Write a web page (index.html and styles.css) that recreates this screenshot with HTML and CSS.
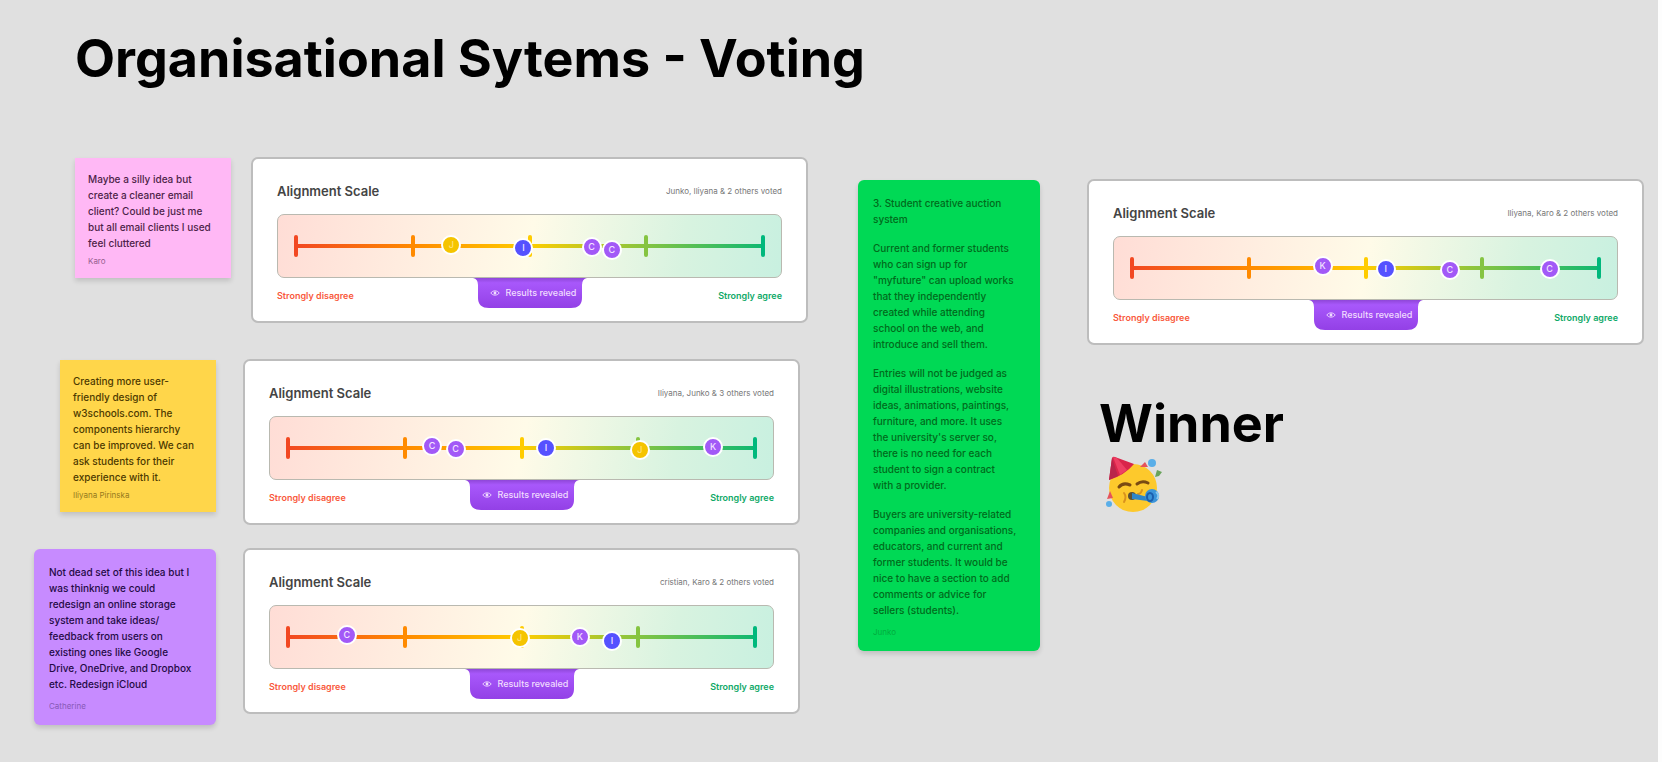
FILE: index.html
```html
<!DOCTYPE html>
<html lang="en">
<head>
<meta charset="utf-8">
<title>Organisational Sytems - Voting</title>
<link rel="stylesheet" href="styles.css">
</head>
<body>
<svg class="defs" aria-hidden="true">
  <symbol id="eye" viewBox="0 0 12 12">
    <path d="M1 6C3 2.600 9 2.600 11 6C9 9.400 3 9.400 1 6Z" fill="none" stroke="currentColor" stroke-width="1.100"/>
    <circle cx="6" cy="6" r="1.700" fill="currentColor"/>
  </symbol>
  <symbol id="tab" viewBox="0 0 114 30">
    <path d="M0 0H114Q109 1 109 7V20Q109 30 98 30H16Q5 30 5 20V7Q5 1 0 0Z" fill="url(#tabfill)"/>
  </symbol>
  <linearGradient id="tabfill" x1="0" y1="0" x2="0" y2="1">
    <stop offset="0" stop-color="#8f47d8"/>
    <stop offset="0.160" stop-color="#a858fb"/>
    <stop offset="1" stop-color="#9340e6"/>
  </linearGradient>
</svg>
<main class="board">
  <h1 class="heading heading-main">Organisational Sytems - Voting</h1>

  <article class="note note-pink">
    <p>Maybe a silly idea but<br>create a cleaner email<br>client? Could be just me<br>but all email clients I used<br>feel cluttered</p>
    <footer>Karo</footer>
  </article>
  <article class="note note-yellow">
    <p>Creating more user-<br>friendly design of<br>w3schools.com. The<br>components hierarchy<br>can be improved. We can<br>ask students for their<br>experience with it.</p>
    <footer>Iliyana Pirinska</footer>
  </article>
  <article class="note note-wide note-purple">
    <p>Not dead set of this idea but I<br>was thinknig we could<br>redesign an online storage<br>system and take ideas/<br>feedback from users on<br>existing ones like Google<br>Drive, OneDrive, and Dropbox<br>etc. Redesign iCloud</p>
    <footer>Catherine</footer>
  </article>
  <article class="note note-wide note-green">
    <p>3. Student creative auction<br>system</p>
    <p>Current and former students<br>who can sign up for<br>"myfuture" can upload works<br>that they independently<br>created while attending<br>school on the web, and<br>introduce and sell them.</p>
    <p>Entries will not be judged as<br>digital illustrations, website<br>ideas, animations, paintings,<br>furniture, and more. It uses<br>the university's server so,<br>there is no need for each<br>student to sign a contract<br>with a provider.</p>
    <p>Buyers are university-related<br>companies and organisations,<br>educators, and current and<br>former students. It would be<br>nice to have a section to add<br>comments or advice for<br>sellers (students).</p>
    <footer>Junko</footer>
  </article>

  <section class="card card-one">
    <header><h2>Alignment Scale</h2><span class="voted">Junko, Iliyana &amp; 2 others voted</span></header>
    <div class="scale"><div class="track">
      <i></i><i></i><i></i><i></i><i></i>
      <b class="vote gold" style="left:33.4%;top:46%">J</b>
      <b class="vote blue" style="left:48.7%;top:60%">I</b>
      <b class="vote" style="left:63.2%;top:55%">C</b>
      <b class="vote" style="left:67.5%;top:66%">C</b>
    </div></div>
    <footer><span class="no">Strongly disagree</span><span class="tab"><svg class="tab-shape"><use href="#tab"/></svg><svg class="eye"><use href="#eye"/></svg><span class="tab-text">Results revealed</span></span><span class="yes">Strongly agree</span></footer>
  </section>
  <section class="card card-two">
    <header><h2>Alignment Scale</h2><span class="voted">Iliyana, Junko &amp; 3 others voted</span></header>
    <div class="scale"><div class="track">
      <i></i><i></i><i></i><i></i><i></i>
      <b class="vote" style="left:31%;top:43%">C</b>
      <b class="vote" style="left:36%;top:53%">C</b>
      <b class="vote blue" style="left:55.2%;top:49%">I</b>
      <b class="vote gold" style="left:75.1%;top:61%">J</b>
      <b class="vote" style="left:90.7%;top:47%">K</b>
    </div></div>
    <footer><span class="no">Strongly disagree</span><span class="tab"><svg class="tab-shape"><use href="#tab"/></svg><svg class="eye"><use href="#eye"/></svg><span class="tab-text">Results revealed</span></span><span class="yes">Strongly agree</span></footer>
  </section>
  <section class="card card-three">
    <header><h2>Alignment Scale</h2><span class="voted">cristian, Karo &amp; 2 others voted</span></header>
    <div class="scale"><div class="track">
      <i></i><i></i><i></i><i></i><i></i>
      <b class="vote" style="left:12.9%;top:43%">C</b>
      <b class="vote gold" style="left:49.6%;top:53%">J</b>
      <b class="vote" style="left:62.4%;top:48%">K</b>
      <b class="vote blue" style="left:69.2%;top:66%">I</b>
    </div></div>
    <footer><span class="no">Strongly disagree</span><span class="tab"><svg class="tab-shape"><use href="#tab"/></svg><svg class="eye"><use href="#eye"/></svg><span class="tab-text">Results revealed</span></span><span class="yes">Strongly agree</span></footer>
  </section>
  <section class="card card-four">
    <header><h2>Alignment Scale</h2><span class="voted">Iliyana, Karo &amp; 2 others voted</span></header>
    <div class="scale"><div class="track">
      <i></i><i></i><i></i><i></i><i></i>
      <b class="vote" style="left:40.9%;top:41%">K</b>
      <b class="vote blue" style="left:54.3%;top:53%">I</b>
      <b class="vote" style="left:67.9%;top:58%">C</b>
      <b class="vote" style="left:89.1%;top:53%">C</b>
    </div></div>
    <footer><span class="no">Strongly disagree</span><span class="tab"><svg class="tab-shape"><use href="#tab"/></svg><svg class="eye"><use href="#eye"/></svg><span class="tab-text">Results revealed</span></span><span class="yes">Strongly agree</span></footer>
  </section>

  <section class="winner">
    <h2 class="heading">Winner</h2>
    <svg class="party" viewBox="0 0 60 60" role="img" aria-label="Partying face">
      <circle cx="30" cy="32" r="24" fill="#fdc92c"/>
      <path d="M6 24L9 2Q10 0 12 1L31 8Q22 19 6 24Z" fill="#d9254a"/>
      <path d="M6 24L9 2L15 20Z" fill="#b9254a"/>
      <path d="M10 1L14 2L24 14L17 19Z" fill="#ee3f63"/>
      <path d="M16 31Q20 26 27 29M34 28Q39 24 45 27" fill="none" stroke="#7a4a12" stroke-width="3" stroke-linecap="round"/>
      <path d="M21 37Q24 41 21 46M39 34Q38 38 35 38" fill="none" stroke="#d9921e" stroke-width="2" stroke-linecap="round"/>
      <circle cx="29" cy="40" r="4" fill="#5b5035"/>
      <path d="M29 37L45 41L45 45L29 43Z" fill="#2f86c8"/>
      <circle cx="49" cy="40" r="7" fill="#3b94d9"/>
      <ellipse cx="47" cy="41" rx="3" ry="4" fill="none" stroke="#1b5fae" stroke-width="2"/>
      <path d="M53 36Q57 39 54 43" fill="none" stroke="#8ec8ee" stroke-width="2"/>
      <circle cx="49" cy="7" r="4" fill="#5aaee8"/>
      <path d="M37 11L42 6L45 11Z" fill="#e5535b"/>
      <path d="M52 21L54 14L59 16L56 20Z" fill="#69a35b"/>
      <path d="M4 43L7 35L10 42Z" fill="#e5535b"/>
      <circle cx="6" cy="48" r="3" fill="#5aaee8"/>
    </svg>
  </section>
</main>
</body>
</html>
```
FILE: styles.css
```css
* { box-sizing: border-box; }
body { margin: 0; background: #e0e0e0; font-family: Inter, "Liberation Sans", sans-serif; }
h1, h2, p { margin: 0; }
.defs { position: absolute; width: 0; height: 0; }

/* Free canvas: every object has its own place */
.board { position: relative; min-height: 100vh; overflow: hidden; border-right: 4px solid #fdfdfd; }

.heading { font-size: 52px; line-height: 64px; font-weight: 700; color: #000; white-space: nowrap; }
.heading-main { position: absolute; left: 75px; top: 27px; }

.note { position: absolute; width: 156px; padding: 13px 13px 11px; font-size: 10px; line-height: 16px; font-weight: 500; white-space: nowrap; box-shadow: 0 3px 5px rgba(0, 0, 0, 0.14); }
.note footer { font-size: 8px; line-height: 12px; font-weight: 400; margin-top: 4px; opacity: 0.6; }
.note-wide { width: 182px; padding: 15px 15px 13px; border-radius: 6px; }
.note-wide p + p { margin-top: 13px; }
.note-wide footer { margin-top: 8px; opacity: 0.4; }
.note-pink { left: 75px; top: 158px; background: #ffb8f5; color: #4d1f48; }
.note-yellow { left: 60px; top: 360px; background: #ffd64a; color: #4d3a00; }
.note-purple { left: 34px; top: 549px; background: #c78bff; color: #240a45; }
.note-green { left: 858px; top: 180px; background: #00d955; color: #006b1c; }

.card { position: absolute; width: 557px; padding: 20px 24px 11px; background: #fff; border: 2px solid #bdbdbd; border-radius: 7px; }
.card-one { left: 251px; top: 157px; }
.card-two { left: 243px; top: 359px; }
.card-three { left: 243px; top: 548px; }
.card-four { left: 1087px; top: 179px; }
.card header { display: flex; justify-content: space-between; align-items: center; height: 24px; }
.card h2 { font-size: 13px; line-height: 24px; font-weight: 600; color: #444; }
.voted { font-size: 8px; color: #777; }
.scale { height: 64px; margin-top: 11px; padding: 20px 16px; border: 1px solid #b9b9b0; border-radius: 7px; background: linear-gradient(100deg, #ffddd6, #fffbe8 50%, #d8f3e0 80%, #c8f0e0); }
.track { position: relative; display: flex; justify-content: space-between; height: 22px; background: linear-gradient(90deg, #f24822, #ff8a00 25%, #ffcd00 50%, #85c441 75%, #0fb872) center / calc(100% - 4px) 4px no-repeat; }
.track i { width: 4px; border-radius: 2px; background: #f24822; }
.track i:nth-child(2) { background: #ff8a00; }
.track i:nth-child(3) { background: #fc0; }
.track i:nth-child(4) { background: #85c441; }
.track i:nth-child(5) { background: #00b87c; }
.vote { position: absolute; width: 20px; height: 20px; margin: -10px; border: 2px solid #fff; border-radius: 50%; background: #a259f7; color: #f3e3ff; font-size: 9px; line-height: 16px; font-weight: 500; text-align: center; }
.vote.blue { background: #5551ff; }
.vote.gold { background: #f5c400; color: #ffe27a; }
.card footer { display: flex; justify-content: space-between; align-items: flex-start; height: 32px; font-size: 9px; line-height: 36px; font-weight: 600; }
.no { flex: 1; color: #f9593c; }
.yes { flex: 1; text-align: right; color: #0fa968; }
.tab { position: relative; display: flex; align-items: center; gap: 6px; width: 114px; height: 30px; padding-left: 17px; color: #f1ddff; font-weight: 500; white-space: nowrap; }
.tab-shape { position: absolute; left: 0; top: 0; width: 114px; height: 30px; }
.eye { position: relative; width: 10px; height: 10px; }
.tab-text { position: relative; line-height: 28px; }
.winner { position: absolute; left: 1099px; top: 392px; }
.party { display: block; width: 60px; height: 60px; margin-left: 4px; }
```
